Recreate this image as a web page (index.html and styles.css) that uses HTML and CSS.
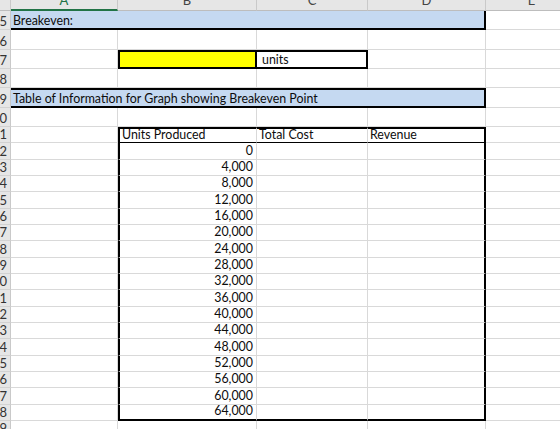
FILE: index.html
```html
<!DOCTYPE html>
<html>
<head>
<meta charset="utf-8">
<link rel="stylesheet" href="styles.css">
</head>
<body>
<div class="sheet">
  <div class="ch corner"></div>
  <div class="ch sel"><span>A</span></div>
  <div class="ch"><span>B</span></div>
  <div class="ch"><span>C</span></div>
  <div class="ch"><span>D</span></div>
  <div class="ch"><span>E</span></div>

  <div class="rh"><span>5</span></div>
  <div class="c band">Breakeven:</div>
  <div class="c"></div>

  <div class="rh"><span>6</span></div>
  <div class="c"></div><div class="c"></div><div class="c"></div><div class="c"></div><div class="c"></div>

  <div class="rh"><span>7</span></div>
  <div class="c"></div>
  <div class="c input"></div>
  <div class="c unit">units</div>
  <div class="c"></div><div class="c"></div>

  <div class="rh"><span>8</span></div>
  <div class="c"></div><div class="c"></div><div class="c"></div><div class="c"></div><div class="c"></div>

  <div class="rh"><span>9</span></div>
  <div class="c band boxed">Table of Information for Graph showing Breakeven Point</div>
  <div class="c"></div>

  <div class="rh"><span>10</span></div>
  <div class="c"></div><div class="c"></div><div class="c"></div><div class="c"></div><div class="c"></div>

  <div class="rh"><span>11</span></div>
  <div class="c"></div>
  <div class="c t-head t-top t-left">Units Produced</div>
  <div class="c t-head t-top">Total Cost</div>
  <div class="c t-head t-top t-right">Revenue</div>
  <div class="c"></div>

  <div class="rh"><span>12</span></div>
  <div class="c"></div><div class="c num t-left">0</div><div class="c"></div><div class="c t-right"></div><div class="c"></div>
  <div class="rh"><span>13</span></div>
  <div class="c"></div><div class="c num t-left">4,000</div><div class="c"></div><div class="c t-right"></div><div class="c"></div>
  <div class="rh"><span>14</span></div>
  <div class="c"></div><div class="c num t-left">8,000</div><div class="c"></div><div class="c t-right"></div><div class="c"></div>
  <div class="rh"><span>15</span></div>
  <div class="c"></div><div class="c num t-left">12,000</div><div class="c"></div><div class="c t-right"></div><div class="c"></div>
  <div class="rh"><span>16</span></div>
  <div class="c"></div><div class="c num t-left">16,000</div><div class="c"></div><div class="c t-right"></div><div class="c"></div>
  <div class="rh"><span>17</span></div>
  <div class="c"></div><div class="c num t-left">20,000</div><div class="c"></div><div class="c t-right"></div><div class="c"></div>
  <div class="rh"><span>18</span></div>
  <div class="c"></div><div class="c num t-left">24,000</div><div class="c"></div><div class="c t-right"></div><div class="c"></div>
  <div class="rh"><span>19</span></div>
  <div class="c"></div><div class="c num t-left">28,000</div><div class="c"></div><div class="c t-right"></div><div class="c"></div>
  <div class="rh"><span>20</span></div>
  <div class="c"></div><div class="c num t-left">32,000</div><div class="c"></div><div class="c t-right"></div><div class="c"></div>
  <div class="rh"><span>21</span></div>
  <div class="c"></div><div class="c num t-left">36,000</div><div class="c"></div><div class="c t-right"></div><div class="c"></div>
  <div class="rh"><span>22</span></div>
  <div class="c"></div><div class="c num t-left">40,000</div><div class="c"></div><div class="c t-right"></div><div class="c"></div>
  <div class="rh"><span>23</span></div>
  <div class="c"></div><div class="c num t-left">44,000</div><div class="c"></div><div class="c t-right"></div><div class="c"></div>
  <div class="rh"><span>24</span></div>
  <div class="c"></div><div class="c num t-left">48,000</div><div class="c"></div><div class="c t-right"></div><div class="c"></div>
  <div class="rh"><span>25</span></div>
  <div class="c"></div><div class="c num t-left">52,000</div><div class="c"></div><div class="c t-right"></div><div class="c"></div>
  <div class="rh"><span>26</span></div>
  <div class="c"></div><div class="c num t-left">56,000</div><div class="c"></div><div class="c t-right"></div><div class="c"></div>
  <div class="rh"><span>27</span></div>
  <div class="c"></div><div class="c num t-left">60,000</div><div class="c"></div><div class="c t-right"></div><div class="c"></div>
  <div class="rh"><span>28</span></div>
  <div class="c"></div><div class="c num t-left t-bottom">64,000</div><div class="c t-bottom"></div><div class="c t-right t-bottom"></div><div class="c"></div>

  <div class="rh"><span>29</span></div>
  <div class="c"></div><div class="c"></div><div class="c"></div><div class="c"></div><div class="c"></div>
</div>
</body>
</html>
```

FILE: styles.css
```css
* {
  box-sizing: border-box;
  margin: 0;
  padding: 0;
}

html, body {
  background: #ffffff;
}

body {
  margin: 0;
  font-family: Lato, "Liberation Sans", sans-serif;
  font-size: 12.4px;
  color: #0d0d0d;
  overflow: hidden;
}

.sheet {
  display: grid;
  grid-template-columns: 11px 107px 139px 111px 118px 92px;
  grid-template-rows: 11px repeat(6, 19.333px) repeat(18, 16.333px) 16.333px;
  width: 560px;
  height: 429px;
  overflow: hidden;
}

.ch {
  background: #e6e6e6;
  border-right: 1px solid #c9c9c9;
  border-bottom: 1px solid #bdbdbd;
  display: flex;
  justify-content: center;
  align-items: flex-end;
  padding-bottom: 4px;
  overflow: hidden;
  font-size: 13px;
  color: #444444;
}

.ch span {
  line-height: 12px;
}

.ch.sel {
  color: #217346;
  border-bottom: 2px solid #217346;
  padding-bottom: 3px;
}

.rh {
  background: #e6e6e6;
  border-right: 1px solid #c9c9c9;
  border-bottom: 1px solid #d2d2d2;
  display: flex;
  justify-content: flex-end;
  align-items: flex-end;
  padding-right: 3px;
  padding-bottom: 1px;
  overflow: hidden;
  color: #333333;
  font-size: 13px;
  line-height: 14px;
  white-space: nowrap;
}

.c {
  border-right: 1px solid #d9d9d9;
  border-bottom: 1px solid #d9d9d9;
  display: flex;
  align-items: flex-end;
  padding: 0 2px 1px 2px;
  white-space: nowrap;
  line-height: 14px;
}

.num {
  justify-content: flex-end;
  padding-right: 3px;
}

.band {
  grid-column: span 4;
  background: #c5d9f1;
  border-right: 2px solid #000000;
  border-bottom: 2px solid #000000;
  padding-bottom: 0;
}

.band.boxed {
  border-top: 2px solid #000000;
  padding-bottom: 0;
}

.input {
  background: #ffff00;
  border: 2px solid #000000;
}

.unit {
  border-top: 2px solid #000000;
  border-right: 2px solid #000000;
  border-bottom: 2px solid #000000;
  padding-left: 5px;
  padding-bottom: 0;
}

.t-head {
  border-bottom: 1px solid #000000;
  padding-bottom: 0;
}

.t-top {
  border-top: 2px solid #000000;
}

.t-left {
  border-left: 2px solid #000000;
}

.t-right {
  border-right: 2px solid #000000;
}

.t-bottom {
  border-bottom: 2px solid #000000;
}
```
